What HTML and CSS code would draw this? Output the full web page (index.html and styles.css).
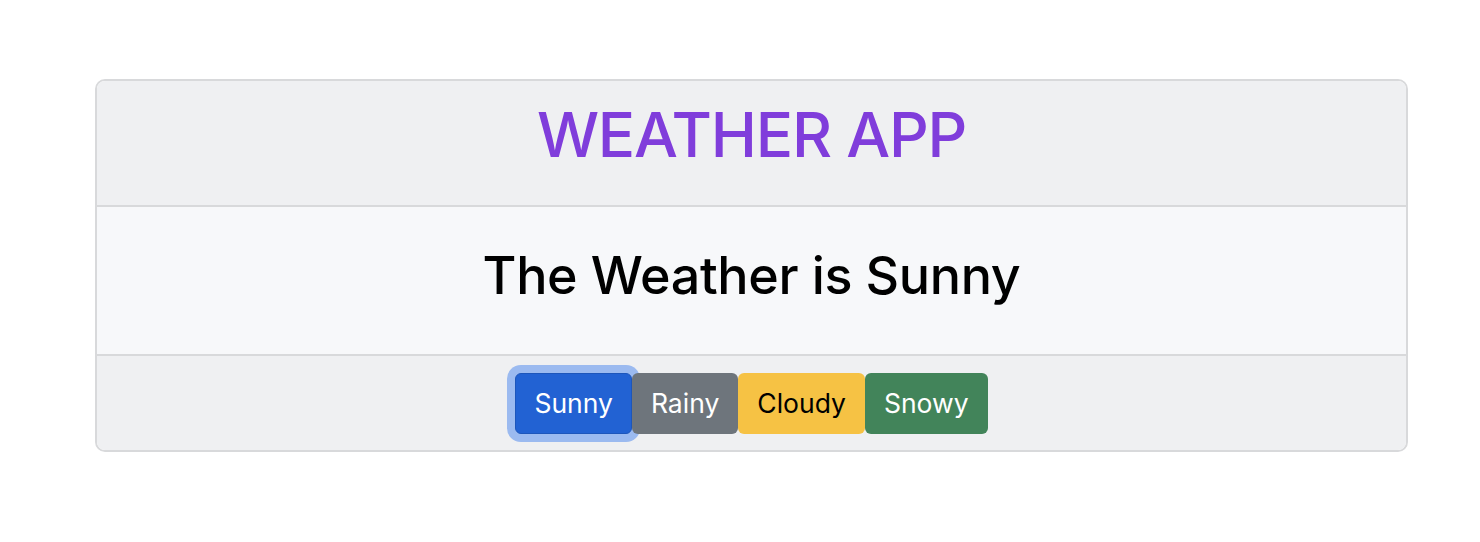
FILE: index.html
```html
<!DOCTYPE html>
<html lang="en">
<head>
<meta charset="utf-8">
<title>Weather App</title>
<link rel="stylesheet" href="styles.css">
</head>
<body>
<div class="page">
  <div class="card">
    <div class="card-header">
      <h1 class="title">WEATHER APP</h1>
    </div>
    <div class="card-body">
      <h2 class="status">The Weather is Sunny</h2>
    </div>
    <div class="card-footer">
      <button class="btn btn-primary is-focused">Sunny</button>
      <button class="btn btn-secondary">Rainy</button>
      <button class="btn btn-warning">Cloudy</button>
      <button class="btn btn-success">Snowy</button>
    </div>
  </div>
</div>
</body>
</html>
```

FILE: styles.css
```css
html, body {
  margin: 0;
  padding: 0;
  background: #ffffff;
  font-family: Inter, "Noto Sans", "Liberation Sans", sans-serif;
}

.page {
  padding: 79px 72px 0 95px;
}

.card {
  border: 2px solid #d8d9db;
  border-radius: 10px;
  overflow: hidden;
}

.card-header {
  background: #eff0f2;
  border-bottom: 2px solid #d8d9db;
  padding: 15px 26px 31px;
  text-align: center;
}

.title {
  margin: 0;
  font-size: 62px;
  font-weight: 450;
  letter-spacing: -1.2px;
  line-height: 78px;
  color: #803ddb;
}

.card-body {
  background: #f7f8fa;
  border-bottom: 2px solid #d8d9db;
  padding: 38px 26px 47px;
  text-align: center;
}

.status {
  margin: 0;
  font-size: 52px;
  font-weight: 450;
  letter-spacing: -0.35px;
  line-height: 62px;
  color: #000000;
}

.card-footer {
  background: #eff0f2;
  padding: 17px 26px 16px;
  display: flex;
  justify-content: center;
}

.btn {
  font-family: inherit;
  font-size: 26.5px;
  line-height: 39px;
  padding: 10px 18px;
  border: 1px solid transparent;
  border-radius: 6px;
  margin: 0;
  cursor: pointer;
}

.btn-primary {
  background: #2262d3;
  border-color: #1d56bb;
  color: #ffffff;
}

.is-focused {
  box-shadow: 0 0 0 8px #9bbaf0;
}

.btn-secondary {
  background: #6e757c;
  color: #ffffff;
}

.btn-warning {
  background: #f6c244;
  color: #000000;
}

.btn-success {
  background: #42845a;
  color: #ffffff;
}
```
